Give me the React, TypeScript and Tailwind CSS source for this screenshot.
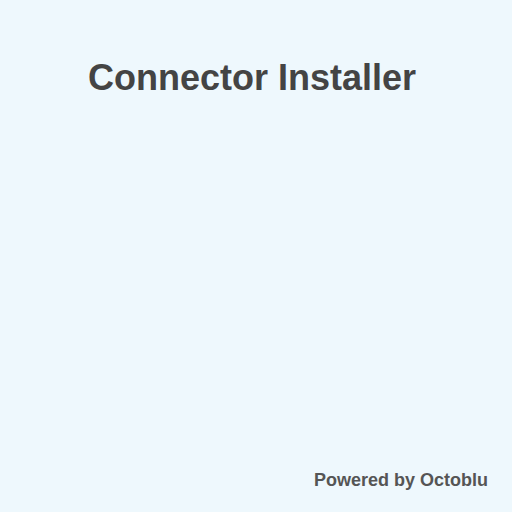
export default function App() {
  return (
    <div
      className="flex flex-col h-screen bg-[#eef8fd] text-[#444]"
      style={{ fontFamily: '"Liberation Sans", Arial, sans-serif' }}
    >
      <h1 className="pt-[57px] pr-2 text-center text-[36px] font-bold leading-[1.15]">
        Connector Installer
      </h1>
      <footer className="mt-auto pb-[21px] pr-6 text-right text-[18px] font-bold leading-[1.15] text-[#555]">
        Powered by Octoblu
      </footer>
    </div>
  );
}
